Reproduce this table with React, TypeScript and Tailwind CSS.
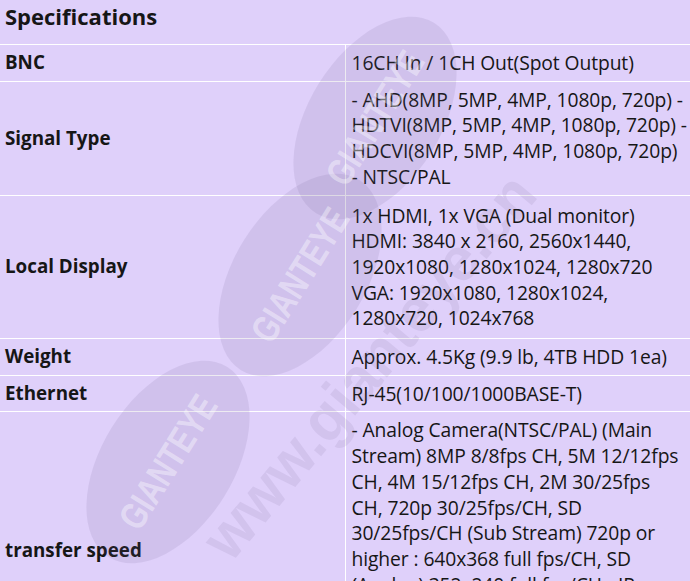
// Specifications table with a faint watermark overlay

const rows: { label: string; lines: string[]; pad?: string }[] = [
  { label: 'BNC', lines: ['16CH In / 1CH Out(Spot Output)'] },
  {
    label: 'Signal Type',
    lines: [
      '- AHD(8MP, 5MP, 4MP, 1080p, 720p) -',
      'HDTVI(8MP, 5MP, 4MP, 1080p, 720p) -',
      'HDCVI(8MP, 5MP, 4MP, 1080p, 720p)',
      '- NTSC/PAL',
    ],
  },
  {
    label: 'Local Display',
    pad: 'py-[7px]',
    lines: [
      '1x HDMI, 1x VGA (Dual monitor)',
      'HDMI: 3840 x 2160, 2560x1440,',
      '1920x1080, 1280x1024, 1280x720',
      'VGA: 1920x1080, 1280x1024,',
      '1280x720, 1024x768',
    ],
  },
  { label: 'Weight', pad: 'py-[5px]', lines: ['Approx. 4.5Kg (9.9 lb, 4TB HDD 1ea)'] },
  { label: 'Ethernet', lines: ['RJ-45(10/100/1000BASE-T)'] },
  {
    label: 'transfer speed',
    pad: 'pt-[5px] pb-[15px]',
    lines: [
      '- Analog Camera(NTSC/PAL) (Main',
      'Stream) 8MP 8/8fps CH, 5M 12/12fps',
      'CH, 4M 15/12fps CH, 2M 30/25fps',
      'CH, 720p 30/25fps/CH, SD',
      '30/25fps/CH (Sub Stream) 720p or',
      'higher : 640x368 full fps/CH, SD',
      '(Analog) 352x240 full fps/CH - IP',
      'Camera (Main Stream) 8MP 30fps',
      'CH (Sub Stream) 640x360 full fps',
      'CH',
    ],
  },
];

function Watermark() {
  return (
    <svg
      className="pointer-events-none absolute inset-0"
      width="690"
      height="581"
      viewBox="0 0 690 581"
    >
      <g fill="#6b5a8a" fillOpacity="0.12">
        <ellipse cx="375" cy="118" rx="112" ry="66" transform="rotate(-58 375 118)" />
        <ellipse cx="300" cy="275" rx="112" ry="66" transform="rotate(-58 300 275)" />
        <ellipse cx="168" cy="462" rx="112" ry="66" transform="rotate(-58 168 462)" />
      </g>
      <g
        fill="#ffffff"
        fillOpacity="0.4"
        fontFamily="'Liberation Sans', Arial, sans-serif"
        fontWeight="700"
        fontSize="38"
        textAnchor="middle"
      >
        <text x="375" y="131" transform="rotate(-58 375 118)" textLength="150" lengthAdjust="spacingAndGlyphs">GIANTEYE</text>
        <text x="300" y="288" transform="rotate(-58 300 275)" textLength="150" lengthAdjust="spacingAndGlyphs">GIANTEYE</text>
        <text x="168" y="475" transform="rotate(-58 168 462)" textLength="150" lengthAdjust="spacingAndGlyphs">GIANTEYE</text>
      </g>
      <text
        x="385"
        y="380"
        transform="rotate(-50 385 380)"
        fill="#6b5a8a"
        fillOpacity="0.11"
        fontFamily="'Liberation Sans', Arial, sans-serif"
        fontWeight="700"
        fontSize="62"
        textAnchor="middle"
        textLength="480"
        lengthAdjust="spacingAndGlyphs"
      >
        www.gianteye.cn
      </text>
    </svg>
  );
}

export default function App() {
  return (
    <div className="relative h-[581px] w-[690px] overflow-hidden bg-[#dfd0fa] font-['Open_Sans','Noto_Sans',sans-serif] text-[#161616]">
      {/* Header */}
      <div className="h-[44px] px-[5px] pt-[1px] text-[22px] font-bold leading-[30px]">
        Specifications
      </div>

      {/* Spec rows */}
      <table className="w-full table-fixed border-collapse">
        <colgroup>
          <col className="w-[345px]" />
          <col />
        </colgroup>
        <tbody>
          {rows.map((row) => (
            <tr key={row.label} className="border-t border-white">
              <td className="border-r border-white px-[5px] py-0 align-middle text-[18.8px] font-bold leading-[25px]">
                {row.label}
              </td>
              <td className={`px-[6px] align-top text-[19.3px] leading-[25.7px] tracking-[-0.1px] ${row.pad ?? 'py-[5px]'}`}>
                {row.lines.map((line, i) => (
                  <div key={i} className="whitespace-nowrap">
                    {line}
                  </div>
                ))}
              </td>
            </tr>
          ))}
        </tbody>
      </table>

      <Watermark />
    </div>
  );
}
